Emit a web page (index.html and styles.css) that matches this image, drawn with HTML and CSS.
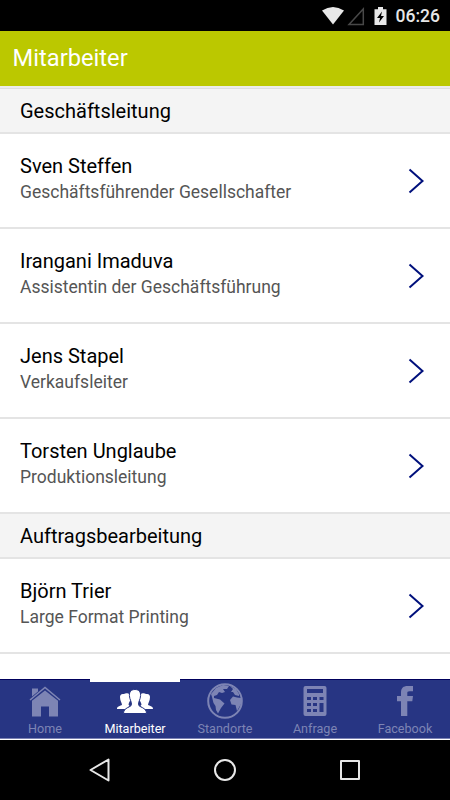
FILE: index.html
```html
<!DOCTYPE html>
<html lang="de">
<head>
  <meta charset="UTF-8">
  <meta name="viewport" content="width=device-width, initial-scale=1.0">
  <title>Mitarbeiter</title>
  <link rel="stylesheet" href="styles.css">
</head>
<body>
  <div class="status-bar">
    <svg class="status-icons" width="66" height="20" viewBox="0 0 66 20">
      <path class="wifi" d="M0 4.5 Q11 -2.5 22 4.5 L11 18.5Z"/>
      <path class="signal" d="M41.3 3V18.5H27Z"/>
      <path class="battery" d="M52.5 3.2H56V1H61V3.2H64.5V19H52.5Z"/>
      <path class="bolt" d="M60 5.5L55 12H58L57 16.5L62 10H59Z"/>
    </svg>
    <span class="clock">06:26</span>
  </div>

  <header class="title-bar">
    <h1>Mitarbeiter</h1>
  </header>

  <main class="list">
    <h2 class="section">Geschäftsleitung</h2>
    <a class="row">
      <div>
        <div class="name">Sven Steffen</div>
        <div class="role">Geschäftsführender Gesellschafter</div>
      </div>
      <svg class="arrow" width="18" height="26" viewBox="0 0 18 26"><path d="M2.5 1.5L15.5 13L2.5 24.5"/></svg>
    </a>
    <a class="row">
      <div>
        <div class="name">Irangani Imaduva</div>
        <div class="role">Assistentin der Geschäftsführung</div>
      </div>
      <svg class="arrow" width="18" height="26" viewBox="0 0 18 26"><path d="M2.5 1.5L15.5 13L2.5 24.5"/></svg>
    </a>
    <a class="row">
      <div>
        <div class="name">Jens Stapel</div>
        <div class="role">Verkaufsleiter</div>
      </div>
      <svg class="arrow" width="18" height="26" viewBox="0 0 18 26"><path d="M2.5 1.5L15.5 13L2.5 24.5"/></svg>
    </a>
    <a class="row">
      <div>
        <div class="name">Torsten Unglaube</div>
        <div class="role">Produktionsleitung</div>
      </div>
      <svg class="arrow" width="18" height="26" viewBox="0 0 18 26"><path d="M2.5 1.5L15.5 13L2.5 24.5"/></svg>
    </a>
    <h2 class="section">Auftragsbearbeitung</h2>
    <a class="row">
      <div>
        <div class="name">Björn Trier</div>
        <div class="role">Large Format Printing</div>
      </div>
      <svg class="arrow" width="18" height="26" viewBox="0 0 18 26"><path d="M2.5 1.5L15.5 13L2.5 24.5"/></svg>
    </a>
    <a class="row last">
      <div>
        <div class="name">Roman F</div>
      </div>
    </a>
  </main>

  <nav class="tabs">
    <a class="tab">
      <svg class="tab-icon" width="36" height="36" viewBox="0 0 36 36">
        <path d="M3 17L18 4.500L33 17" fill="none" stroke="currentColor" stroke-width="1.600"/>
        <path d="M5 5.500H11V8.500L5 13.500Z"/>
        <path d="M5 17.800L18 7.400L31 17.800V33.500H22V23.500H14V33.500H5Z"/>
      </svg>
      <span>Home</span>
    </a>
    <a class="tab active">
      <svg class="tab-icon" width="36" height="36" viewBox="0 0 36 36">
        <path d="M7 11C9 9.500 14 10 13.500 15C13.500 18 12 19 11.500 21.500L12.500 23L9 26H0C0 24 1 23.500 5 22C5 20 3 18 3 14C3 12 4 10.500 7 11Z"/>
        <path d="M29 11C27 9.500 22 10 22.500 15C22.500 18 24 19 24.500 21.500L23.500 23L27 26H36C36 24 35 23.500 31 22C31 20 33 18 33 14C33 12 32 10.500 29 11Z"/>
        <path class="person-front" d="M18 6.500C21.500 6.500 23.800 8.500 23.600 12.500C23.300 17 21.500 18 21.500 21.500C21.500 24.500 29.500 24 29.500 30.500H6.500C6.500 24 14.500 24.500 14.500 21.500C14.500 18 12.700 17 12.400 12.500C12.200 8.500 14.500 6.500 18 6.500Z"/>
      </svg>
      <span>Mitarbeiter</span>
    </a>
    <a class="tab">
      <svg class="tab-icon" width="36" height="36" viewBox="0 0 36 36">
        <circle cx="18" cy="18" r="16.800" fill="none" stroke="currentColor" stroke-width="2"/>
        <path d="M4 11L9 5L16 2L22 3L20 6L16 6L18 9L15 10L12 9L10 12L7 13L7 15L13 16.500L17.500 20.500L14 25L11 30.500L9 27L8.500 23L6.500 20L5 14Z"/>
        <path d="M23 3L29 6L32 11L32 13L28 12L26 9L24 9L26 6ZM23 17L26 13.500L30 14.500L34 15L34 21L30 28L28.500 22L24.500 21.500Z"/>
      </svg>
      <span>Standorte</span>
    </a>
    <a class="tab">
      <svg class="tab-icon" width="36" height="36" viewBox="0 0 36 36">
        <path fill-rule="evenodd" d="M8.500 3H27.500Q29.500 3 29.500 5V31Q29.500 33 27.500 33H8.500Q6.500 33 6.500 31V5Q6.500 3 8.500 3ZM10 6V10H26V6ZM10 14V17H14V14ZM16 14V17H20V14ZM22.500 14V17H26.500V14ZM10 20V23H14V20ZM16 20V23H20V20ZM22.500 20V29H26.500V20ZM10 26V29H14V26ZM16 26V29H20V26Z"/>
      </svg>
      <span>Anfrage</span>
    </a>
    <a class="tab">
      <svg class="tab-icon" width="36" height="36" viewBox="0 0 36 36">
        <path d="M26 3V8.300H22.500C20.500 8.300 20.300 9 20.300 10.500V13H26L25.300 18.300H20.300V33H14V18.300H10V13H14V9.500C14 5 16.500 3 20.500 3Z"/>
      </svg>
      <span>Facebook</span>
    </a>
  </nav>

  <footer class="system-nav">
    <svg width="24" height="26" viewBox="0 0 24 26"><path d="M20.500 2.500V23.500L2.500 13Z"/></svg>
    <svg width="24" height="26" viewBox="0 0 24 26"><circle cx="12" cy="13" r="10"/></svg>
    <svg width="24" height="26" viewBox="0 0 24 26"><rect x="3" y="4" width="18" height="18"/></svg>
  </footer>
</body>
</html>
```
FILE: styles.css
```css
* {
  box-sizing: border-box;
}

body {
  margin: 0;
  height: 800px;
  display: flex;
  flex-direction: column;
  overflow: hidden;
  background-color: #fff;
  font-family: Roboto, sans-serif;
}

h1,
h2 {
  margin: 0;
  font-weight: 400;
}

/* Status bar */
.status-bar {
  height: 31px;
  flex: none;
  display: flex;
  justify-content: flex-end;
  align-items: center;
  gap: 8px;
  padding-right: 10px;
  background-color: #000;
  color: #e6e6e6;
}

.clock {
  font-size: 17.5px;
  font-weight: 500;
  line-height: 31px;
  padding-top: 1px;
}

.wifi,
.battery {
  fill: #e8e8e8;
}

.signal {
  fill: none;
  stroke: #484848;
  stroke-width: 1.5;
}

.bolt {
  fill: #000;
}

/* Title */
.title-bar {
  height: 55px;
  flex: none;
  padding-left: 12.6px;
  background-color: #bbc800;
  color: #fff;
}

.title-bar h1 {
  font-size: 23.7px;
  line-height: 55px;
}

/* Employee list */
.list {
  flex: 1;
  min-height: 0;
  overflow: hidden;
  border-top: 2px solid #ececea;
}

.section {
  height: 45px;
  padding-left: 20px;
  border-bottom: 2px solid #e4e4e4;
  background-color: #f4f4f4;
  font-size: 20px;
  line-height: 44px;
}

.section:first-child {
  height: 46px;
  border-top: 1px solid #dedede;
}

.row {
  height: 95px;
  display: flex;
  justify-content: space-between;
  padding: 19px 25px 0 20px;
  border-bottom: 2px solid #e4e4e4;
}

.row.last {
  padding-top: 20px;
}

.name {
  font-size: 20px;
  line-height: 26px;
  color: #000;
}

.role {
  font-size: 17.5px;
  line-height: 27px;
  color: #555;
}

.arrow {
  margin-top: 15px;
  fill: none;
  stroke: #00107c;
  stroke-width: 2;
}

/* Tabs */
.tabs {
  height: 61px;
  flex: none;
  display: flex;
  border-top: 1px solid #00005c;
  border-bottom: 1px solid #fff;
  box-shadow: inset 0 -1px 0 #7c83b5;
  background-color: #273583;
}

.tab {
  flex: 1;
  display: flex;
  flex-direction: column;
  align-items: center;
  padding-top: 3px;
  color: #7d84b4;
  font-size: 12.6px;
  line-height: 20px;
}

.tab.active {
  margin-top: -1px;
  padding-top: 1px;
  border-top: 3px solid #fff;
  color: #fff;
}

.tab-icon {
  fill: currentColor;
}

.person-front {
  stroke: #273583;
  stroke-width: 1;
}

/* System navigation */
.system-nav {
  height: 60px;
  flex: none;
  display: flex;
  justify-content: center;
  align-items: center;
  gap: 101px;
  background-color: #000;
}

.system-nav svg {
  fill: none;
  stroke: #e8e8e8;
  stroke-width: 2;
  stroke-linejoin: round;
}
```
